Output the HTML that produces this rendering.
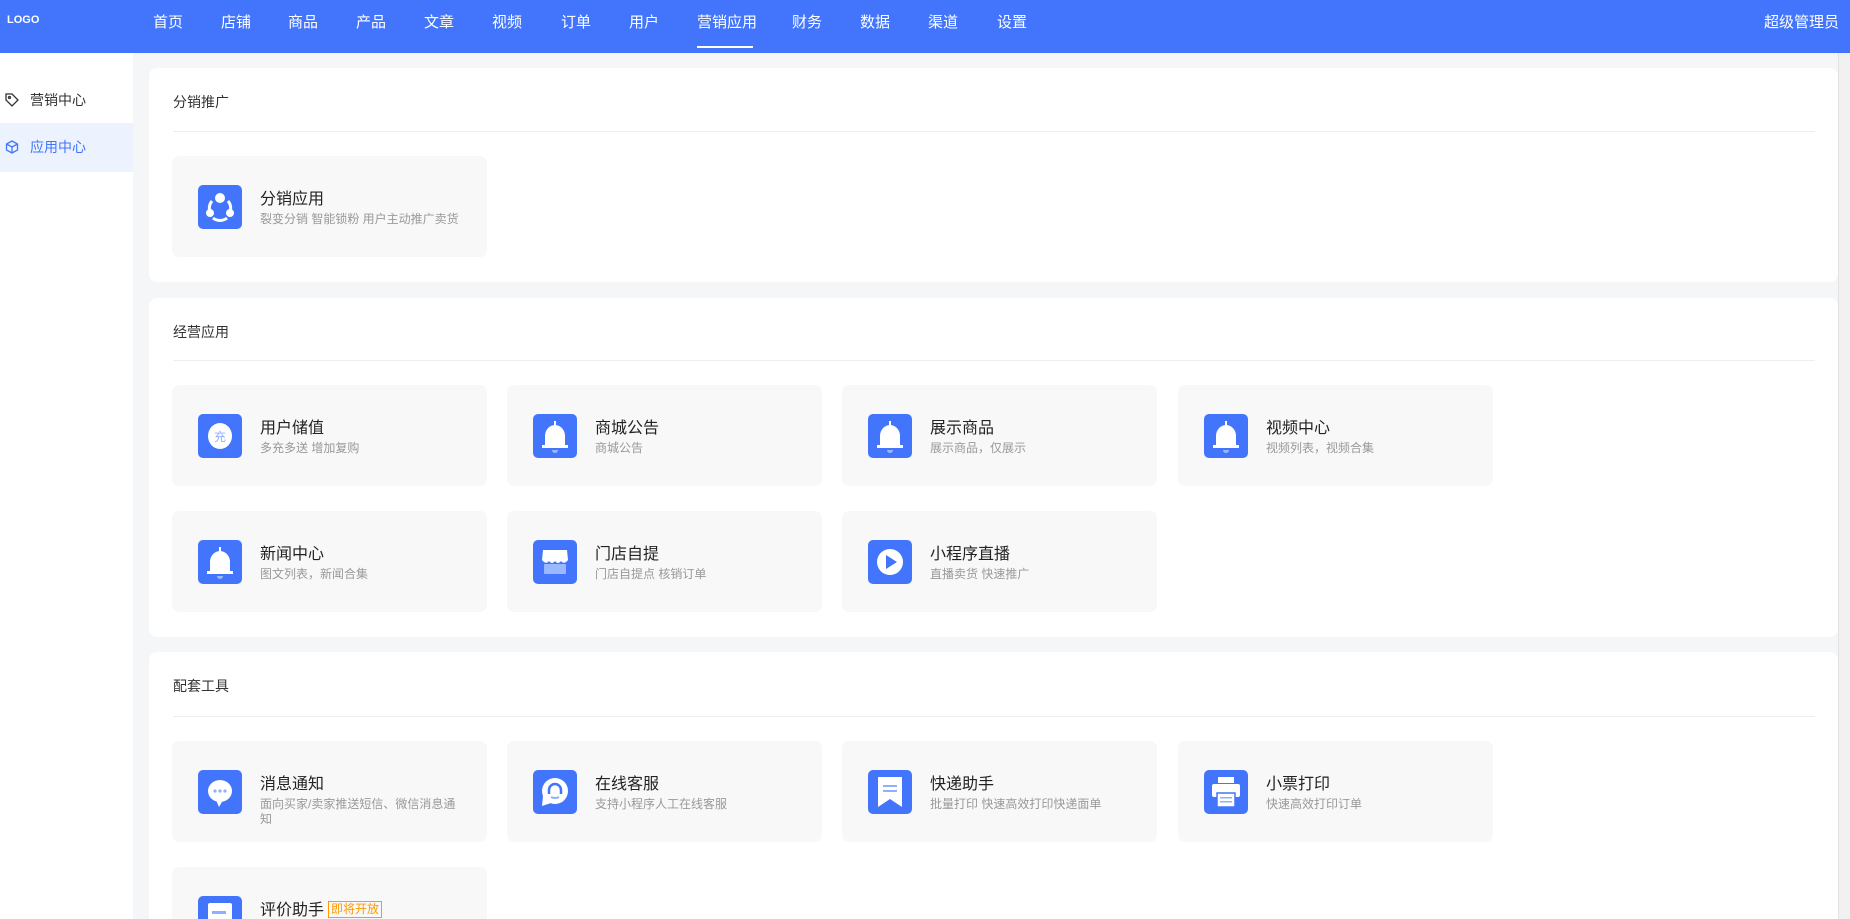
<!DOCTYPE html>
<html style="width:1850px;height:919px;overflow:hidden"><head><meta charset="utf-8"><style>
*{margin:0;padding:0;box-sizing:border-box}
body{width:1850px;height:919px;overflow:hidden;background:#f5f6f8;font-family:"Liberation Sans","Noto Sans CJK SC",sans-serif;position:relative}
.hd{position:absolute;left:0;top:0;width:1850px;height:53px;background:#4275fc;color:#fff}
.hd span{position:absolute;top:11px;font-size:15px}
.logo{left:7px;top:14px!important;font-size:11px!important;font-weight:bold}
.ul{position:absolute;left:697px;top:46px;width:56px;height:2px;background:#fff}
.sb{position:absolute;left:0;top:53px;width:133px;height:866px;background:#fff}
.si{position:absolute;left:0;width:133px;height:49px;font-size:14px;color:#333;line-height:49px;padding-left:30px}
.si svg{position:absolute;left:5px;top:17px}
.si.on{background:#ecf2fe;color:#4275fc}
.scroll{position:absolute;left:1838px;top:53px;width:12px;height:866px;background:#f1f1f1;border-left:1px solid #e2e2e2}
.card{position:absolute;left:149px;width:1689px;background:#fff;border-radius:8px;overflow:hidden}
.ct{position:absolute;left:24px;font-size:14px;color:#333}
.dv{position:absolute;left:24px;width:1642px;height:1px;background:#eee}
.it{position:absolute;width:315px;height:101px;background:#f8f8f8;border-radius:7px}
.ic{position:absolute;left:26px;top:29px;width:44px;height:44px;background:#4275fc;border-radius:5px}
.tt{position:absolute;left:88px;top:29px;font-size:16px;color:#222}
.ds{position:absolute;left:88px;top:56px;font-size:12px;color:#999;width:200px;line-height:15px}
.tag{display:inline-block;border:1px solid #f90;color:#f90;font-size:12px;padding:0 2px;line-height:15px;margin-left:4px;vertical-align:2px}
</style></head><body>
<div class="hd">
<span class="logo">LOGO</span>
<span style="left:153px">首页</span><span style="left:221px">店铺</span><span style="left:288px">商品</span><span style="left:356px">产品</span><span style="left:424px">文章</span><span style="left:492px">视频</span><span style="left:561px">订单</span><span style="left:629px">用户</span><span style="left:697px">营销应用</span><span style="left:792px">财务</span><span style="left:860px">数据</span><span style="left:928px">渠道</span><span style="left:997px">设置</span>
<span style="left:1764px">超级管理员</span>
<div class="ul"></div>
</div>
<div class="sb">
<div class="si" style="top:23px"><svg width="14" height="14" viewBox="0 0 14 14" fill="none" stroke="#333" stroke-width="1.3"><path d="M7 1L13 7L7 13L1 7V1Z"/><circle cx="4.5" cy="4.5" r="1"/></svg>营销中心</div>
<div class="si on" style="top:70px"><svg width="14" height="14" viewBox="0 0 14 14" fill="none" stroke="#4275fc" stroke-width="1.3"><path d="M7 1L12.5 4V10L7 13L1.5 10V4Z"/><path d="M1.5 4L7 7L12.5 4M7 7V13"/></svg>应用中心</div>
</div>
<div class="scroll"></div>

<div class="card" style="top:68px;height:214px">
<div class="ct" style="top:24px">分销推广</div><div class="dv" style="top:63px"></div>
<div class="it" style="left:23px;top:88px"><div class="ic"><svg width="44" height="44" viewBox="0 0 44 44"><circle cx="22" cy="13" r="5" fill="#fff"/><circle cx="12" cy="28" r="4" fill="#fff"/><circle cx="32" cy="28" r="4" fill="#fff"/><path d="M14 16A11 11 0 0 0 13 29M30 16A11 11 0 0 1 31 29M15 33A11 11 0 0 0 29 33" stroke="#fff" stroke-width="3" fill="none"/></svg></div><div class="tt">分销应用</div><div class="ds">裂变分销 智能锁粉 用户主动推广卖货</div></div>
</div>

<div class="card" style="top:298px;height:339px">
<div class="ct" style="top:24px">经营应用</div><div class="dv" style="top:62px"></div>
<div class="it" style="left:23px;top:87px"><div class="ic"><svg width="44" height="44"><ellipse cx="22" cy="22" rx="12" ry="13" fill="#fff"/><text x="22" y="27" font-size="12" fill="#8fb0ff" text-anchor="middle" font-family="Noto Sans CJK SC">充</text></svg></div><div class="tt">用户储值</div><div class="ds">多充多送 增加复购</div></div>
<div class="it" style="left:358px;top:87px"><div class="ic"><svg width="44" height="44"><path d="M12 32V22A10 11 0 0 1 32 22V32Z" fill="#fff"/><rect x="9" y="31" width="26" height="3" fill="#fff"/><rect x="21" y="7" width="2" height="5" fill="#fff"/><path d="M19 36A3 3 0 0 0 25 36Z" fill="#9bb8ff"/></svg></div><div class="tt">商城公告</div><div class="ds">商城公告</div></div>
<div class="it" style="left:693px;top:87px"><div class="ic"><svg width="44" height="44"><path d="M12 32V22A10 11 0 0 1 32 22V32Z" fill="#fff"/><rect x="9" y="31" width="26" height="3" fill="#fff"/><rect x="21" y="7" width="2" height="5" fill="#fff"/><path d="M19 36A3 3 0 0 0 25 36Z" fill="#9bb8ff"/></svg></div><div class="tt">展示商品</div><div class="ds">展示商品，仅展示</div></div>
<div class="it" style="left:1029px;top:87px"><div class="ic"><svg width="44" height="44"><path d="M12 32V22A10 11 0 0 1 32 22V32Z" fill="#fff"/><rect x="9" y="31" width="26" height="3" fill="#fff"/><rect x="21" y="7" width="2" height="5" fill="#fff"/><path d="M19 36A3 3 0 0 0 25 36Z" fill="#9bb8ff"/></svg></div><div class="tt">视频中心</div><div class="ds">视频列表，视频合集</div></div>
<div class="it" style="left:23px;top:213px"><div class="ic"><svg width="44" height="44"><path d="M12 32V22A10 11 0 0 1 32 22V32Z" fill="#fff"/><rect x="9" y="31" width="26" height="3" fill="#fff"/><rect x="21" y="7" width="2" height="5" fill="#fff"/><path d="M19 36A3 3 0 0 0 25 36Z" fill="#9bb8ff"/></svg></div><div class="tt">新闻中心</div><div class="ds">图文列表，新闻合集</div></div>
<div class="it" style="left:358px;top:213px"><div class="ic"><svg width="44" height="44"><path d="M10 10H34L35 20Q31 25 28 21Q25 25 22 21Q19 25 16 21Q13 25 9 20Z" fill="#fff"/><rect x="11" y="24" width="22" height="10" rx="1" fill="#9bb8ff"/></svg></div><div class="tt">门店自提</div><div class="ds">门店自提点 核销订单</div></div>
<div class="it" style="left:693px;top:213px"><div class="ic"><svg width="44" height="44"><circle cx="22" cy="22" r="13" fill="#fff"/><path d="M18 15L29 22L18 29Z" fill="#4275fc"/></svg></div><div class="tt">小程序直播</div><div class="ds">直播卖货 快速推广</div></div>
</div>

<div class="card" style="top:652px;height:267px;border-radius:8px 8px 0 0">
<div class="ct" style="top:24px">配套工具</div><div class="dv" style="top:64px"></div>
<div class="it" style="left:23px;top:89px"><div class="ic"><svg width="44" height="44"><ellipse cx="22" cy="21" rx="12" ry="11" fill="#fff"/><path d="M18 30L21 37L25 30Z" fill="#fff"/><circle cx="17" cy="21" r="1.6" fill="#8fb0ff"/><circle cx="22" cy="21" r="1.6" fill="#8fb0ff"/><circle cx="27" cy="21" r="1.6" fill="#8fb0ff"/></svg></div><div class="tt">消息通知</div><div class="ds">面向买家/卖家推送短信、微信消息通<br>知</div></div>
<div class="it" style="left:358px;top:89px"><div class="ic"><svg width="44" height="44"><circle cx="22" cy="21" r="13" fill="#fff"/><path d="M10 26L9 36L18 33Z" fill="#fff"/><path d="M16 24V20A6 6 0 0 1 28 20V24" stroke="#4275fc" stroke-width="2.5" fill="none"/><path d="M18 27A6 4 0 0 0 26 27" stroke="#8fb0ff" stroke-width="2" fill="none"/></svg></div><div class="tt">在线客服</div><div class="ds">支持小程序人工在线客服</div></div>
<div class="it" style="left:693px;top:89px"><div class="ic"><svg width="44" height="44"><path d="M10 7H34V37L22 29L10 37Z" fill="#fff"/><rect x="15" y="15" width="14" height="2" fill="#8fb0ff"/><rect x="15" y="20" width="14" height="2" fill="#8fb0ff"/></svg></div><div class="tt">快递助手</div><div class="ds">批量打印 快速高效打印快递面单</div></div>
<div class="it" style="left:1029px;top:89px"><div class="ic"><svg width="44" height="44"><rect x="14" y="7" width="16" height="6" fill="#fff"/><rect x="8" y="14" width="28" height="13" rx="2" fill="#fff"/><rect x="13" y="23" width="18" height="14" fill="#fff" stroke="#4275fc" stroke-width="1.5"/><rect x="16" y="27" width="12" height="1.5" fill="#8fb0ff"/><rect x="16" y="31" width="12" height="1.5" fill="#8fb0ff"/></svg></div><div class="tt">小票打印</div><div class="ds">快速高效打印订单</div></div>
<div class="it" style="left:23px;top:215px"><div class="ic"><svg width="44" height="44"><rect x="10" y="7" width="24" height="30" rx="2" fill="#fff"/><rect x="14" y="15" width="14" height="3" fill="#8fb0ff"/></svg></div><div class="tt">评价助手<span class="tag">即将开放</span></div></div>
</div>
</body></html>
